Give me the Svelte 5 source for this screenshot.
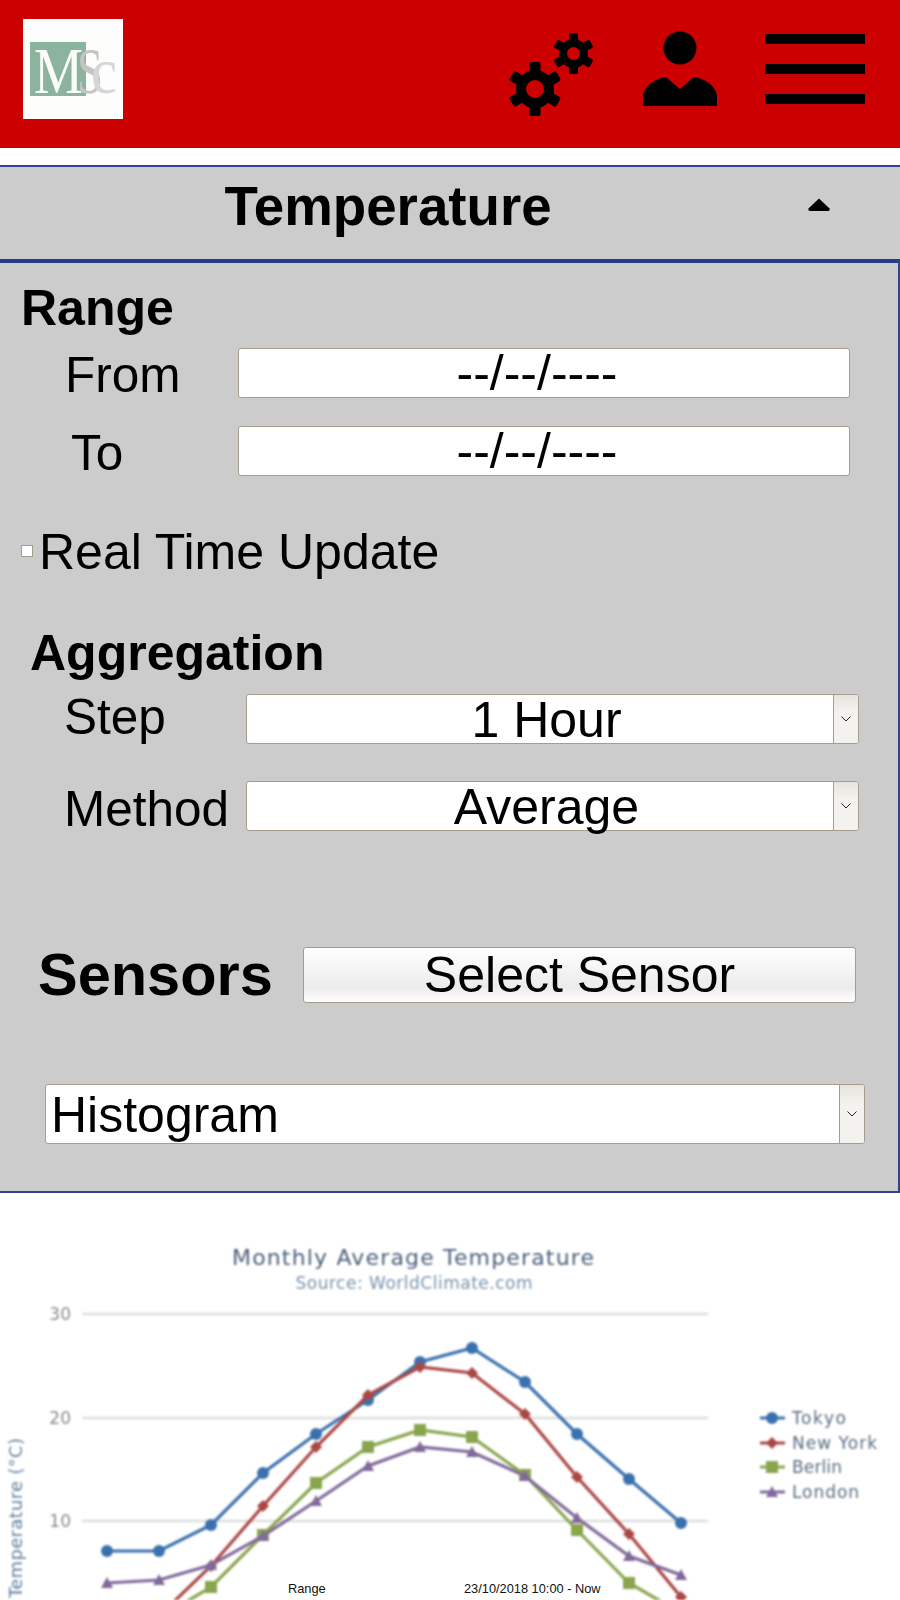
<script>
  const xs = [107, 159, 211, 263, 316, 368, 420, 472, 525, 577, 629, 681];
  const series = [
    { name: 'Tokyo', width: 54, color: '#3a70ad', kind: 'circle', ys: [1551, 1551, 1525, 1473, 1434, 1400, 1362, 1348, 1382, 1434, 1479, 1523] },
    { name: 'New York', width: 85, color: '#aa4643', kind: 'diamond', ys: [1627, 1616, 1566, 1506, 1447, 1395, 1367, 1373, 1414, 1477, 1534, 1597] },
    { name: 'Berlin', width: 50, color: '#89a54e', kind: 'square', ys: [1634, 1618, 1587, 1535, 1483, 1447, 1430, 1437, 1475, 1530, 1583, 1613] },
    { name: 'London', width: 67, color: '#80699b', kind: 'triangle', ys: [1583, 1580, 1565, 1536, 1501, 1466, 1447, 1452, 1476, 1518, 1556, 1575] }
  ];
  const grid = [
    { label: '30', y: 1314 },
    { label: '20', y: 1418 },
    { label: '10', y: 1521 }
  ];
  const legendY = [1418, 1443, 1467, 1492];
  const points = (ys) => ys.map((y, i) => `${xs[i]},${y}`).join(' ');
  const marker = (kind, x, y) => {
    if (kind === 'diamond') return `${x},${y - 6} ${x + 6},${y} ${x},${y + 6} ${x - 6},${y}`;
    if (kind === 'square') return `${x - 6},${y - 6} ${x + 6},${y - 6} ${x + 6},${y + 6} ${x - 6},${y + 6}`;
    return `${x},${y - 6} ${x + 6},${y + 5} ${x - 6},${y + 5}`;
  };
  const teeth = [0, 60, 120, 180, 240, 300];
</script>

<div class="page">
  <header class="topbar">
    <svg class="logo" viewBox="0 0 100 100" aria-label="MSc logo">
      <rect width="100" height="100" fill="#fdfefc" />
      <rect x="7" y="23" width="56" height="54" fill="#8cb39e" />
      <text x="11" y="74" class="logo-m" textLength="49" lengthAdjust="spacingAndGlyphs">M</text>
      <text x="54" y="74" class="logo-s" textLength="26" lengthAdjust="spacingAndGlyphs">S</text>
      <text x="68" y="74" class="logo-c" textLength="26" lengthAdjust="spacingAndGlyphs">c</text>
    </svg>
    <div class="icons">
      <svg class="gears" viewBox="0 0 100 100" aria-label="Settings">
        <g transform="translate(30 70)">
          <circle r="14" class="ring" stroke-width="10" />
          {#each teeth as a}
            <rect x="-5.5" y="-27" width="11" height="10" rx="2" transform="rotate({a})" />
          {/each}
        </g>
        <g transform="translate(68.5 34.5)">
          <circle r="10.5" class="ring" stroke-width="8" />
          {#each teeth as a}
            <rect x="-4.5" y="-20.5" width="9" height="8" rx="1.6" transform="rotate({a})" />
          {/each}
        </g>
      </svg>
      <svg class="person" viewBox="0 0 80 100" aria-label="Account">
        <circle cx="40" cy="29" r="16.5" />
        <path d="M3 87 V78 C3 68 14 60 26 58 L40 70 L54 58 C66 60 77 68 77 78 V87 Z" />
      </svg>
      <div class="burger" aria-label="Menu"><span></span><span></span><span></span></div>
    </div>
  </header>

  <section class="accordion">
    <div class="acc-head">
      <h1>Temperature</h1>
      <svg class="caret" viewBox="0 0 22 13"><path d="M11 .5 L21.5 10.5 Q22 13 20 13 H2 Q0 13 .5 10.5 Z" /></svg>
    </div>

    <div class="panel">
      <h2 class="range">Range</h2>
      <div class="row">
        <label class="lab-range lab-from" for="from">From</label>
        <input id="from" class="date" type="text" readonly value="--/--/----" />
      </div>
      <div class="row to">
        <label class="lab-range lab-to" for="to">To</label>
        <input id="to" class="date" type="text" readonly value="--/--/----" />
      </div>

      <div class="realtime">
        <span class="check"></span>
        <span>Real Time Update</span>
      </div>

      <h2 class="aggregation">Aggregation</h2>
      <div class="row">
        <span class="lab-agg lab-step">Step</span>
        <div class="sel">
          <span class="val center">1 Hour</span>
          <span class="arrow"><svg viewBox="0 0 10 6"><path d="M.5 .5 L5 5 L9.5 .5" /></svg></span>
        </div>
      </div>
      <div class="row method">
        <span class="lab-agg lab-method">Method</span>
        <div class="sel">
          <span class="val center">Average</span>
          <span class="arrow"><svg viewBox="0 0 10 6"><path d="M.5 .5 L5 5 L9.5 .5" /></svg></span>
        </div>
      </div>

      <div class="sensors">
        <h2>Sensors</h2>
        <button type="button">Select Sensor</button>
      </div>

      <div class="sel wide">
        <span class="val">Histogram</span>
        <span class="arrow"><svg viewBox="0 0 10 6"><path d="M.5 .5 L5 5 L9.5 .5" /></svg></span>
      </div>
    </div>
  </section>

  <div class="chart">
    <svg viewBox="0 1193 900 407" width="900" height="407" class="plot">
      <text x="413" y="1265" class="c-title" text-anchor="middle" textLength="362">Monthly Average Temperature</text>
      <text x="414" y="1289" class="c-sub" text-anchor="middle" textLength="237">Source: WorldClimate.com</text>
      {#each grid as g}
        <line x1="82" x2="708" y1={g.y} y2={g.y} class="gridline" />
        <text x="71" y={g.y + 6} class="tick" text-anchor="end">{g.label}</text>
      {/each}
      <text transform="translate(22 1598) rotate(-90)" class="axis" textLength="160">Temperature (°C)</text>
      {#each series as s, si}
        <polyline points={points(s.ys)} fill="none" stroke={s.color} stroke-width="3.2" />
        {#each s.ys as y, i}
          {#if s.kind === 'circle'}
            <circle cx={xs[i]} cy={y} r="6" fill={s.color} />
          {:else}
            <polygon points={marker(s.kind, xs[i], y)} fill={s.color} />
          {/if}
        {/each}
        <line x1="760" x2="785" y1={legendY[si]} y2={legendY[si]} stroke={s.color} stroke-width="3" />
        {#if s.kind === 'circle'}
          <circle cx="772" cy={legendY[si]} r="6" fill={s.color} />
        {:else}
          <polygon points={marker(s.kind, 772, legendY[si])} fill={s.color} />
        {/if}
        <text x="792" y={legendY[si] + 6} class="legend" textLength={s.width}>{s.name}</text>
      {/each}
    </svg>
    <span class="over over-a">Range</span>
    <span class="over over-b">23/10/2018 10:00 - Now</span>
  </div>
</div>

<style>
  :global(body) {
    margin: 0;
    background: #fff;
  }
  .page {
    width: 900px;
    height: 1600px;
    overflow: hidden;
    display: flex;
    flex-direction: column;
    font-family: "Liberation Sans", Arial, sans-serif;
    color: #000;
  }
  .topbar {
    flex: none;
    height: 148px;
    box-sizing: border-box;
    padding: 19px 35px 29px 23px;
    background: #cc0000;
    display: flex;
    align-items: center;
    justify-content: space-between;
  }
  .logo { width: 100px; height: 100px; display: block; }
  .logo text { font-family: "Liberation Serif", serif; font-size: 66px; }
  .logo-m { fill: #fbfdfb; }
  .logo-s { fill: #c4c4c4; }
  .logo-c { fill: #d6d6d6; }
  .icons { display: flex; align-items: center; }
  .gears { width: 100px; height: 100px; margin-right: 35px; filter: blur(0.5px); }
  .gears .ring { fill: none; stroke: #000; }
  .person { width: 80px; height: 100px; margin-right: 45px; filter: blur(0.4px); }
  .burger { width: 100px; display: flex; flex-direction: column; gap: 20px; }
  .burger span { display: block; height: 10px; background: #000; }

  .accordion { margin-top: 17px; flex: none; }
  .acc-head {
    display: flex;
    align-items: flex-start;
    height: 92px;
    background: #cccccc;
    border-top: 2px solid #2f4591;
    border-bottom: 2px solid #263b8b;
  }
  h1 {
    margin: 0;
    width: 776px;
    flex: none;
    text-align: center;
    font-size: 54.7px;
    line-height: 78px;
    font-weight: 700;
  }
  .caret { width: 22px; height: 13px; margin: 31px 0 0 32px; flex: none; }
  .panel {
    background: #cccccc;
    border-top: 2px solid #263b8b;
    border-right: 2px solid #2f4591;
    border-bottom: 2px solid #2f4591;
    padding-bottom: 47px;
  }
  h2 { margin: 0; font-size: 50px; line-height: 58px; font-weight: 700; }
  .range { padding: 16px 0 11px 21px; }
  .row { display: flex; align-items: flex-start; padding-left: 65px; }
  .row.to { margin-top: 28px; }
  .row.method { margin-top: 37px; }
  label, .lab-agg { font-size: 49.5px; line-height: 50px; flex: none; }
  .lab-range { width: 173px; }
  .lab-from { margin: 2px 0 -2px; }
  .lab-to { margin: 2px 0 -2px; padding-left: 6px; box-sizing: border-box; }
  .lab-agg { width: 182px; margin-left: -1px; }
  .lab-step { margin-top: -2px; }
  .lab-method { margin-top: 3px; margin-bottom: -3px; }
  .date {
    width: 612px;
    height: 50px;
    box-sizing: border-box;
    margin: 0;
    padding: 0 14px 0 0;
    border: 1px solid #a69d8f;
    border-radius: 3px;
    background: #fff;
    color: #000;
    font: 50px/48px "Liberation Sans", Arial, sans-serif;
    text-align: center;
    outline: none;
  }
  .realtime {
    display: flex;
    align-items: flex-start;
    margin-top: 47px;
    padding-left: 21px;
    font-size: 50px;
    line-height: 58px;
  }
  .check {
    width: 12px;
    height: 12px;
    box-sizing: border-box;
    margin: 22px 6px 0 0;
    border: 1px solid #a69d8f;
    background: #fff;
    flex: none;
  }
  .aggregation { margin-top: 43px; padding: 0 0 12px 30px; }
  .sel {
    width: 613px;
    height: 50px;
    box-sizing: border-box;
    display: flex;
    border: 1px solid #a69d8f;
    border-radius: 3px;
    background: #fff;
    font-size: 50px;
    line-height: 50px;
  }
  .val { flex: 1; min-width: 0; white-space: nowrap; }
  .center { text-align: center; padding-left: 13px; }
  .arrow {
    flex: none;
    width: 25px;
    box-sizing: border-box;
    border-left: 1px solid #a69d8f;
    border-radius: 0 2px 2px 0;
    background: linear-gradient(#e6e4de, #f3f2ee 35%, #f3f2ee);
    display: flex;
    align-items: center;
    justify-content: center;
  }
  .arrow svg { width: 10px; height: 6px; }
  .arrow path { fill: none; stroke: #222; stroke-width: 1; }
  .sensors {
    display: flex;
    align-items: flex-start;
    margin-top: 116px;
    padding-left: 38px;
  }
  .sensors h2 { width: 265px; flex: none; font-size: 59.5px; line-height: 55px; }
  button {
    width: 553px;
    height: 56px;
    box-sizing: border-box;
    margin: 0;
    padding: 1px 0 0;
    border: 1px solid #a69d8f;
    border-radius: 3px;
    background: linear-gradient(#ffffff, #f3f3f3 45%, #ebebeb 72%, #ffffff);
    color: #000;
    font: 50px/53px "Liberation Sans", Arial, sans-serif;
  }
  .wide {
    width: 820px;
    height: 60px;
    margin: 81px 0 0 45px;
    line-height: 60px;
  }
  .wide .val { padding-left: 5px; }

  .chart { position: relative; flex: none; height: 407px; overflow: hidden; background: #fff; }
  .plot { display: block; filter: blur(0.9px); font-family: "DejaVu Sans", sans-serif; }
  .c-title { font-size: 22px; fill: #4a5f7b; }
  .c-sub { font-size: 17px; fill: #7b93ad; }
  .tick { font-size: 17px; fill: #8a8a8a; }
  .axis { font-size: 18px; fill: #5f7f9f; }
  .legend { font-size: 17px; fill: #5a6c80; }
  .gridline { stroke: #dddddd; stroke-width: 2.5; }
  .over {
    position: absolute;
    top: 388px;
    font-size: 12.8px;
    line-height: 16px;
    white-space: nowrap;
    color: #111;
  }
  .over-a { left: 288px; }
  .over-b { left: 464px; }
</style>
